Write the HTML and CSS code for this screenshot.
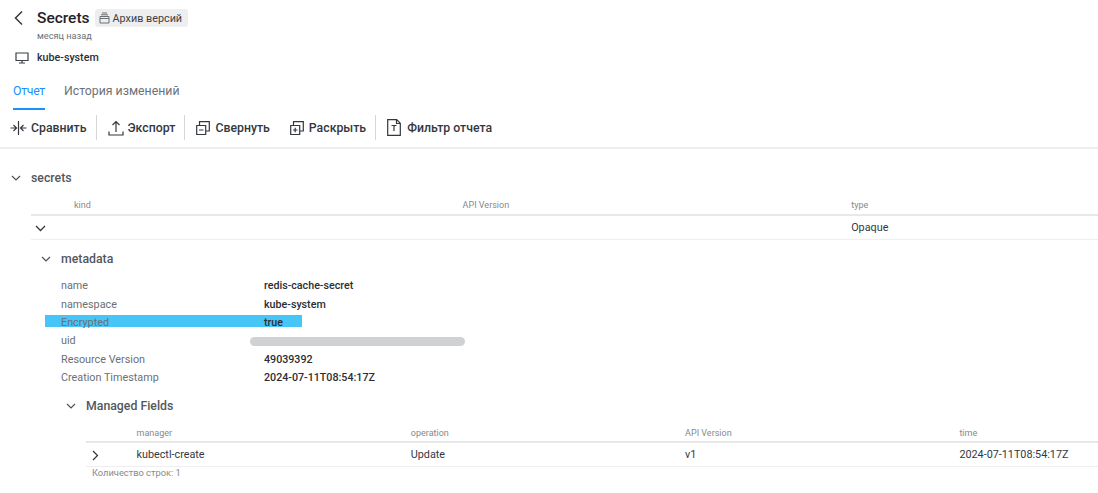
FILE: index.html
```html
<!DOCTYPE html>
<html lang="ru">
<head>
<meta charset="utf-8">
<title>Secrets</title>
<link rel="stylesheet" href="styles.css">
</head>
<body>
<header class="head">
  <div class="title-row">
    <svg class="back" width="10" height="16" viewBox="0 0 10 16"><path d="M8 1.500 1.500 8 8 14.500"/></svg>
    <h1 class="title">Secrets</h1>
    <span class="badge">
      <svg width="11" height="12" viewBox="0 0 11 12"><path d="M1 4.500h9v6.500H1zM2 2.800h7M3 1h5M1 6.500h9"/></svg>
      Архив версий
    </span>
  </div>
  <div class="subtitle">месяц назад</div>
  <div class="ns-row">
    <svg width="14" height="12" viewBox="0 0 14 12"><path d="M1 1h12v7.500H1zM7 8.500V11M4 11h6"/></svg>
    <span>kube-system</span>
  </div>
</header>
<nav class="tabs">
  <span class="tab active">Отчет</span>
  <span class="tab">История изменений</span>
</nav>
<div class="toolbar">
  <span class="tool">
    <svg width="17" height="16" viewBox="0 0 17 16"><path d="M8.500 1v14M.5 8h5.500M3.500 5 6.500 8l-3 3M16.500 8H11M13.500 5l-3 3 3 3"/></svg>
    Сравнить
  </span>
  <i class="sep"></i>
  <span class="tool">
    <svg width="16" height="16" viewBox="0 0 16 16"><path d="M1 11.500V15h14v-3.500M8 12V1.500M4.500 5 8 1.500 11.500 5"/></svg>
    Экспорт
  </span>
  <i class="sep"></i>
  <span class="tool wide">
    <svg width="14" height="14" viewBox="0 0 14 14"><path d="M.7 4.500h9v9h-9zM3.500 4.500V.7h9.800v9.300H9.700M3 9h4.500"/></svg>
    Свернуть
  </span>
  <span class="tool wide">
    <svg width="14" height="14" viewBox="0 0 14 14"><path d="M.7 4.500h9v9h-9zM3.500 4.500V.7h9.800v9.300H9.700M3 9h4.500M5.200 6.700v4.600"/></svg>
    Раскрыть
  </span>
  <i class="sep"></i>
  <span class="tool widest">
    <svg width="14" height="17" viewBox="0 0 14 17"><path d="M.7.700h9l3.600 3.600v12H.7zM9.500.700v3.800h3.800M4.500 6.500h5M7 6.500V12"/></svg>
    Фильтр отчета
  </span>
</div>
<main class="report">
  <h2 class="section top">
    <svg class="chev" width="10" height="6" viewBox="0 0 10 6"><path d="M1 1l4 4 4-4"/></svg>
    secrets
  </h2>
  <div class="table outer">
    <div class="cols thead"><span>kind</span><span>API Version</span><span>type</span></div>
    <div class="cols trow">
      <svg class="chev row-chev" width="11" height="7" viewBox="0 0 11 7"><path d="M1 1l4.500 4.500L10 1"/></svg>
      <span></span><span></span><span>Opaque</span>
    </div>
  </div>
  <h2 class="section meta">
    <svg class="chev" width="10" height="6" viewBox="0 0 10 6"><path d="M1 1l4 4 4-4"/></svg>
    metadata
  </h2>
  <dl class="kv">
    <dt>name</dt><dd>redis-cache-secret</dd>
    <dt>namespace</dt><dd>kube-system</dd>
    <dt><i class="highlight"></i><span>Encrypted</span></dt><dd>true</dd>
    <dt>uid</dt><dd><i class="redact"></i></dd>
    <dt>Resource Version</dt><dd>49039392</dd>
    <dt>Creation Timestamp</dt><dd>2024-07-11T08:54:17Z</dd>
  </dl>
  <h2 class="section managed">
    <svg class="chev" width="10" height="6" viewBox="0 0 10 6"><path d="M1 1l4 4 4-4"/></svg>
    Managed Fields
  </h2>
  <div class="table inner">
    <div class="cols thead"><span>manager</span><span>operation</span><span>API Version</span><span>time</span></div>
    <div class="cols trow">
      <svg class="chev row-chev" width="7" height="11" viewBox="0 0 7 11"><path d="M1 1l4.500 4.500L1 10"/></svg>
      <span>kubectl-create</span><span>Update</span><span>v1</span><span>2024-07-11T08:54:17Z</span>
    </div>
    <div class="count">Количество строк: 1</div>
  </div>
  <div class="section next">
    <svg class="chev" width="10" height="6" viewBox="0 0 10 6"><path d="M1 1l4 4 4-4"/></svg>
  </div>
</main>
</body>
</html>
```
FILE: styles.css
```css
* { box-sizing: border-box; }
html, body { margin: 0; height: 493px; overflow: hidden; }
body {
  background: #fff;
  color: #1f2329;
  font-family: Roboto, "Noto Sans", sans-serif;
  font-size: 10.800px;
}
svg { fill: none; stroke: currentColor; stroke-width: 1.2; flex: none; display: block; }

.head { padding: 9px 0 0 14px; height: 66px; }
.title-row { display: flex; align-items: center; height: 18px; }
.back { stroke-width: 1.500; color: #33383f; margin-right: 13px; }
.title { margin: 0; font-size: 15.500px; line-height: 18px; font-weight: 500; color: #1f2329; }
.badge {
  display: flex; align-items: center; gap: 3px;
  height: 18px; margin-left: 5px; padding: 0 6px 0 4px;
  background: #eeeeee; border-radius: 3px;
  font-size: 10.800px; color: #3c4148;
}
.badge svg { stroke-width: 1; color: #6a6f75; }
.subtitle { margin: 3px 0 0 23px; font-size: 9.200px; line-height: 12px; color: #6b7076; }
.ns-row { display: flex; align-items: center; gap: 8px; margin: 9px 0 0 1px; font-size: 10.700px; line-height: 14px; font-weight: 500; color: #2a2e34; }
.ns-row svg { color: #3b4046; }

.tabs { display: flex; gap: 19px; height: 44px; padding: 17px 0 0 13px; }
.tab { font-size: 12.300px; line-height: 16px; color: #6d7278; height: 27px; }
.tab.active { color: #1890ff; border-bottom: 2px solid #1890ff; letter-spacing: -.3px; }

.toolbar { display: flex; align-items: center; height: 39px; padding: 0 0 2px 10px; border-bottom: 2px solid #eeeeee; }
.tool { display: flex; align-items: center; gap: 4px; font-size: 12.300px; font-weight: 500; color: #33383f; }
.tool svg { color: #33383f; stroke-width: 1.200; }
.tool.wide { gap: 5px; }
.tool.widest { gap: 6px; }
.sep { width: 1px; height: 25px; background: #d4d6d8; margin: 0 11px 0 9px; }
.tool + .tool { margin-left: 20px; }

.section { display: flex; align-items: center; margin: 0; font-size: 12.300px; line-height: 18px; font-weight: 500; color: #52575d; }
.chev { color: #4d5258; stroke-width: 1.200; }
.section .chev { margin-right: 10px; }
.section.top { margin: 20px 0 0 11px; }
.section.meta { margin: 10px 0 0 41px; }
.section.managed { margin: 9.500px 0 0 66px; }
.section.next { height: 18px; margin: 7.500px 0 0 66px; }

.table { position: relative; }
.outer { margin: 10px 0 0 31px; }
.inner { margin: 9.500px 0 0 86px; }
.cols { display: grid; }
.outer .cols { grid-template-columns: 388.600px 388.600px 1fr; padding-left: 43px; }
.inner .cols { grid-template-columns: 274.300px 274.300px 274.300px 1fr; padding-left: 50.500px; }
.thead { height: 19px; line-height: 17px; font-size: 9px; color: #85898e; border-bottom: 2px solid #e8e8e8; }
.trow { position: relative; height: 24px; line-height: 23px; font-size: 10.800px; color: #33383f; border-bottom: 1px solid #eeeeee; }
.inner .thead { line-height: 19px; }
.row-chev { position: absolute; color: #33383f; stroke-width: 1.300; }
.outer .row-chev { left: 4px; top: 9px; }
.inner .row-chev { left: 6px; top: 7px; }
.count { padding: 0 0 0 6px; font-size: 9.300px; line-height: 12px; color: #85898e; }

.kv { display: grid; grid-template-columns: 203px 1fr; grid-auto-rows: 18.400px; align-items: center; margin: 9px 0 0 61px; line-height: 18px; }
.kv dt { color: #6b7076; position: relative; }
.kv dt span { position: relative; }
.kv dd { margin: 0; font-size: 10.700px; font-weight: 500; color: #2a2e34; position: relative; }
.highlight { position: absolute; left: -16px; top: 1px; width: 257px; height: 12px; background: #45c6f6; }
.redact { display: block; width: 215px; height: 9.500px; margin-left: -14px; border-radius: 5px; background: #cfd1d2; }
```
